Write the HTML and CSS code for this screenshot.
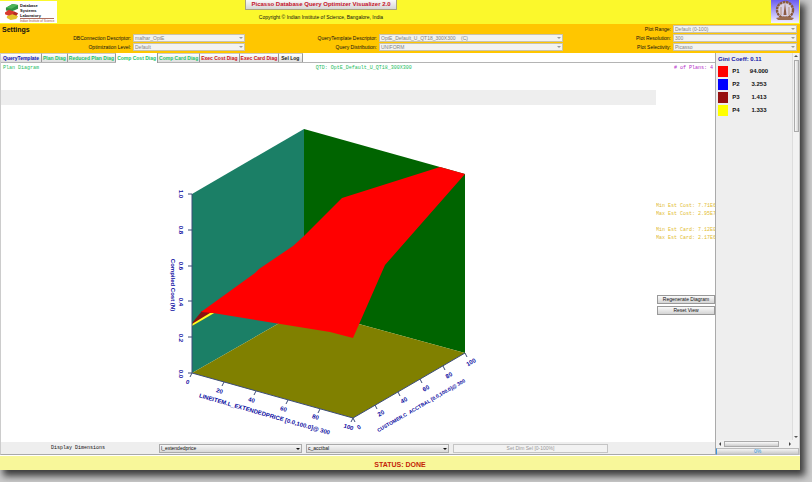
FILE: index.html
```html
<!DOCTYPE html>
<html lang="en">
<head>
<meta charset="utf-8">
<title>Picasso Database Query Optimizer Visualizer 2.0</title>
<link rel="stylesheet" href="styles.css">
</head>
<body>
<div class="window">
  <header class="banner">
    <div class="lab-logo">
      <svg class="lab-mark" viewBox="0 0 15 18" aria-hidden="true">
        <path d="M1 5 L8 1 L14 2 L14 6 L7 9 L1 8Z" fill="#2f9444"/>
        <path d="M1 5 L8 1 L14 2 L7 6Z" fill="#4cb45a"/>
        <path d="M0 10 L4 7 L10 9 L10 12 L5 14 L0 12Z" fill="#d83a2c"/>
        <path d="M10 9 L14 11 L12 14 L8 13Z" fill="#b52a22"/>
        <path d="M2 14 L8 12 L14 14 L12 17 L6 18 L2 16Z" fill="#e3c32c"/>
      </svg>
      <div class="lab-name">
        <div>Database</div><div>Systems</div><div>Laboratory</div>
        <small>Indian Institute of Science</small>
      </div>
    </div>
    <div class="heading">
      <button class="title" type="button">Picasso Database Query Optimizer Visualizer 2.0</button>
      <p class="copyright">Copyright © Indian Institute of Science, Bangalore, India</p>
    </div>
    <svg class="crest" viewBox="0 0 28 23" aria-hidden="true">
      <defs>
        <linearGradient id="sky" x1="0" y1="0" x2="0" y2="1">
          <stop offset="0" stop-color="#6a5cf0"/><stop offset="1" stop-color="#f4f2ff"/>
        </linearGradient>
      </defs>
      <rect width="28" height="23" fill="url(#sky)"/>
      <circle cx="14" cy="10" r="8" fill="#d9cfe2" stroke="#8a5a3c" stroke-width="2.4" stroke-dasharray="2.6 .6"/>
      <path d="M14 3 L15.500 15 H12.500Z" fill="#8c5a44"/>
      <path d="M10 7 V15 M18 7 V15" stroke="#b4917c"/>
      <path d="M5 18 Q14 15 23 18 L21 20 H7Z" fill="#9a6c50"/>
    </svg>
  </header>

  <section class="settings">
    <h2>Settings</h2>
    <label class="c1 r2" for="conn">DBConnection Descriptor:</label>
    <div class="combo r2"><select id="conn" disabled><option>malhar_OptE</option></select></div>
    <label class="c1 r3" for="level">Optimization Level:</label>
    <div class="combo r3"><select id="level" disabled><option>Default</option></select></div>
    <label class="c3 r2" for="qt">QueryTemplate Descriptor:</label>
    <div class="combo c4 r2"><select id="qt" disabled><option>OptE_Default_U_QT18_300X300 &nbsp;&nbsp; (C)</option></select></div>
    <label class="c3 r3" for="dist">Query Distribution:</label>
    <div class="combo c4 r3"><select id="dist" disabled><option>UNIFORM</option></select></div>
    <label class="c5 r1" for="range">Plot Range:</label>
    <div class="combo c6 r1"><select id="range" disabled><option>Default (0-100)</option></select></div>
    <label class="c5 r2" for="res">Plot Resolution:</label>
    <div class="combo c6 r2"><select id="res" disabled><option>300</option></select></div>
    <label class="c5 r3" for="sel">Plot Selectivity:</label>
    <div class="combo c6 r3"><select id="sel" disabled><option>Picasso</option></select></div>
  </section>

  <div class="workspace">
    <main class="main">
      <nav class="tabs" role="tablist">
        <button role="tab" class="blue">QueryTemplate</button>
        <button role="tab" class="green">Plan Diag</button>
        <button role="tab" class="green">Reduced Plan Diag</button>
        <button role="tab" class="green active" aria-selected="true">Comp Cost Diag</button>
        <button role="tab" class="green">Comp Card Diag</button>
        <button role="tab" class="red">Exec Cost Diag</button>
        <button role="tab" class="red">Exec Card Diag</button>
        <button role="tab" class="black">Sel Log</button>
      </nav>
      <div class="info">
        <span>Plan Diagram</span>
        <span>QTD: OptE_Default_U_QT18_300X300</span>
        <span class="plans"># of Plans: 4</span>
      </div>
      <div class="view">
        <div class="band"></div>
        <svg class="plot" viewBox="1 105 655 337" role="img" aria-label="Compiled cost surface">
          <polygon points="192,194 304,129 304,309 192,373" fill="#1b7f66"/>
          <polygon points="304,129 465,174 465,353 304,309" fill="#006400"/>
          <polygon points="192,373 304,309 465,353 353,418" fill="#808000"/>
          <polygon points="192,323 202,311 215,312 192,326" fill="#8b1010"/>
          <polygon points="192,324 210,313 216,312 192,326" fill="#ffff20"/>
          <polygon points="201,312 255,273 259,269 293,246 304,236 342,198 440,167 465,174 385,265 353,338 330,332 213,313" fill="#ff0000"/>
          <g class="axis">
            <path d="M192 194V373L353 418L465 353M188 194h4M188 230h4M188 266h4M188 301h4M188 337h4M188 373h4M192 373l-2 4M224 382l-2 4M256 391l-2 4M288 400l-2 4M320 409l-2 4M353 418l-2 4M353 418l2 4M375 405l2 4M398 392l2 4M420 379l2 4M443 366l2 4M465 353l2 4"/>
          </g>
          <g class="ticks">
            <text transform="translate(179 194) rotate(90)">1.0</text>
            <text transform="translate(179 230) rotate(90)">0.8</text>
            <text transform="translate(179 266) rotate(90)">0.6</text>
            <text transform="translate(179 302) rotate(90)">0.4</text>
            <text transform="translate(179 338) rotate(90)">0.2</text>
            <text transform="translate(179 374) rotate(90)">0.0</text>
            <text transform="translate(187 384) rotate(16)">0</text>
            <text transform="translate(219 393) rotate(16)">20</text>
            <text transform="translate(251 402) rotate(16)">40</text>
            <text transform="translate(283 411) rotate(16)">60</text>
            <text transform="translate(315 419) rotate(16)">80</text>
            <text transform="translate(348 429) rotate(16)">100</text>
            <text transform="translate(360 429) rotate(-30)">0</text>
            <text transform="translate(382 415) rotate(-30)">20</text>
            <text transform="translate(405 402) rotate(-30)">40</text>
            <text transform="translate(427 390) rotate(-30)">60</text>
            <text transform="translate(450 377) rotate(-30)">80</text>
            <text transform="translate(472 364) rotate(-30)">100</text>
          </g>
          <g class="names">
            <text transform="translate(171 285) rotate(90)">Compiled Cost (N)</text>
            <text transform="translate(264 416) rotate(16)">LINEITEM.L_EXTENDEDPRICE [0.0,100.0]@ 300</text>
            <text class="tight" transform="translate(422 407) rotate(-30)">CUSTOMER.C_ACCTBAL [0.0,100.0]@ 300</text>
          </g>
        </svg>
        <aside class="side">
          <p>Min Est Cost: 7.71E6<br>Max Est Cost: 2.95E7</p>
          <p>Min Est Card: 7.12E0<br>Max Est Card: 2.17E6</p>
          <div class="actions">
            <button type="button">Regenerate Diagram</button>
            <button type="button">Reset View</button>
          </div>
        </aside>
      </div>
      <div class="dims">
        <span>Display Dimensions</span>
        <div class="combo live"><select aria-label="First dimension"><option>l_extendedprice</option></select></div>
        <div class="combo live"><select aria-label="Second dimension"><option>c_acctbal</option></select></div>
        <button type="button" disabled>Set Dim Sel [0-100%]</button>
      </div>
    </main>

    <aside class="legend">
      <div class="legend-body">
        <h3>Gini Coeff: 0.11</h3>
        <table>
          <tr><td><i class="swatch p1"></i></td><th>P1</th><td>94.000</td></tr>
          <tr><td><i class="swatch p2"></i></td><th>P2</th><td>3.253</td></tr>
          <tr><td><i class="swatch p3"></i></td><th>P3</th><td>1.413</td></tr>
          <tr><td><i class="swatch p4"></i></td><th>P4</th><td>1.333</td></tr>
        </table>
      </div>
      <div class="vbar"><i class="arrow up"></i><b></b><i class="arrow down"></i></div>
      <div class="hbar"><i class="arrow left"></i><b></b><i class="arrow right"></i></div>
      <div class="progress">0%</div>
    </aside>
  </div>
  <footer class="status">STATUS: DONE</footer>
</div>
</body>
</html>
```
FILE: styles.css
```css
* { box-sizing: border-box; }

body {
  margin: 0;
  height: 100vh;
  padding: 0 12px 12px 0;
  background: #cbcbcb;
  overflow: hidden;
  font: 5px/8px "Liberation Sans", Arial, sans-serif;
  color: #111;
}

h2, h3, p { margin: 0; }

button, select { font: inherit; margin: 0; }

.window {
  height: 100%;
  display: flex;
  flex-direction: column;
  box-shadow: 4px 5px 7px 1px #3c3c3c;
}

/* Banner */
.banner {
  display: grid;
  grid-template-columns: 58px 1fr 58px;
  height: 24px;
  background: #fbf82c;
}

.lab-logo {
  display: flex;
  gap: 1px;
  margin: 1px 1px 1px 0;
  padding: 2px 0 0 5px;
  background: #fff;
}

.lab-mark { width: 14px; height: 17px; flex: none; }

.lab-name {
  font-size: 4px;
  font-weight: bold;
  line-height: 5px;
  white-space: nowrap;
}

.lab-name small {
  display: block;
  border-top: 1px solid #b07060;
  font-size: 3px;
  font-weight: normal;
  line-height: 4px;
  color: #a05040;
}

.heading {
  display: flex;
  flex-direction: column;
  align-items: center;
  padding-right: 158px;
}

.title {
  height: 10px;
  padding: 0 6px;
  border: 1px solid #a9a47c;
  border-top: 0;
  background: linear-gradient(#fafafa, #d6d6d6);
  color: #c4122a;
  font-size: 6px;
  font-weight: bold;
  line-height: 9px;
  white-space: nowrap;
}

.copyright { margin-top: 3px; white-space: nowrap; }

.crest { width: 28px; height: 23px; justify-self: end; margin-right: 1px; }

/* Settings */
.settings {
  display: grid;
  grid-template-columns: 133fr 112fr 134fr 184fr 110fr 124fr;
  grid-template-rows: repeat(3, 9px);
  height: 29px;
  padding: 1px 3px 1px 0;
  background: #ffc600;
}

.settings h2 {
  grid-area: 1 / 1;
  padding-left: 2px;
  font-size: 7px;
  line-height: 9px;
}

.settings label { text-align: right; padding-right: 2px; line-height: 9px; white-space: nowrap; }

.r1 { grid-row: 1; }
.r2 { grid-row: 2; }
.r3 { grid-row: 3; }
.c1 { grid-column: 1; }
.combo { grid-column: 2; position: relative; display: flex; }
.c3 { grid-column: 3; }
.combo.c4 { grid-column: 4; }
.c5 { grid-column: 5; }
.combo.c6 { grid-column: 6; }

.combo select {
  appearance: none;
  width: 100%;
  height: 8px;
  padding: 0 1px;
  border: 1px solid #c9c3ac;
  border-radius: 0;
  background: #f3f3f1;
  color: #848484;
  line-height: 6px;
  opacity: 1;
}

.combo::after {
  content: "";
  position: absolute;
  right: 2px;
  top: 3px;
  border: 2px solid transparent;
  border-top-color: #999;
  border-bottom: 0;
}

/* Work area */
.workspace {
  flex: 1;
  min-height: 0;
  display: grid;
  grid-template-columns: minmax(0, 1fr) 84px;
  border-bottom: 1px solid #fff;
}

.main {
  display: flex;
  flex-direction: column;
  min-height: 0;
  background: #fff;
  border-left: 1px solid #ccc;
  border-right: 1px solid #aaa;
  border-bottom: 1px solid #aaa;
}

.tabs {
  display: flex;
  align-items: flex-end;
  height: 10px;
  border-bottom: 1px solid #b4b4b4;
}

.tabs button {
  height: 9px;
  padding: 0 1px;
  border: 0;
  border-right: 1px solid #999;
  border-top: 1px solid #ccc;
  background: linear-gradient(#fff, #dedede);
  font-size: 5px;
  font-weight: bold;
  line-height: 8px;
  white-space: nowrap;
}

.tabs button:first-child { padding: 0 2px; }
.tabs .active { height: 10px; margin-bottom: -1px; border-top: 0; background: #fff; }
.tabs button:last-child { padding: 0 3px 0 2px; }
.blue { color: #1212b4; }
.green { color: #1cc468; }
.red { color: #cc1020; }
.black { color: #222; }

.info {
  display: grid;
  grid-template-columns: 315fr 300fr 100fr;
  height: 27px;
  padding: 1px 2px 0 2px;
  font-family: "Liberation Mono", monospace;
  color: #1cbc60;
}

.plans { text-align: right; color: #b428c8; }

.view {
  flex: 1;
  min-height: 0;
  display: grid;
  grid-template-columns: minmax(0, 1fr) 59px;
  grid-template-rows: 15px minmax(0, 1fr);
}

.band { background: #eee; }

.plot { grid-row: 2; width: 100%; height: 100%; }

.axis path { fill: none; stroke: #3c4c78; stroke-width: 1; }

.ticks text, .names text {
  font: bold 6px "Liberation Sans", Arial, sans-serif;
  fill: #0808a0;
  text-anchor: middle;
}

.names .tight { font-size: 5px; }

.side {
  grid-row: 2;
  grid-column: 2;
  padding-top: 97px;
  overflow: hidden;
  font-family: "Liberation Mono", monospace;
  color: #e2bc30;
  white-space: nowrap;
}

.side p { margin-bottom: 8px; }

.actions {
  display: grid;
  gap: 2px;
  margin: 53px 0 0 1px;
  font-family: "Liberation Sans", Arial, sans-serif;
}

.actions button {
  height: 9px;
  padding: 0;
  border: 1px solid #999;
  background: linear-gradient(#fafafa, #d4d4d4);
  color: #111;
  line-height: 7px;
}

.dims {
  display: grid;
  grid-template-columns: 154fr 143fr 143fr 155fr 103fr;
  column-gap: 4px;
  align-items: center;
  height: 12px;
  background: #eee;
}

.dims span { text-align: center; font-family: "Liberation Mono", monospace; }
.dims .combo { grid-column: auto; }

.dims .combo select {
  height: 9px;
  border-color: #aaa;
  background: linear-gradient(#f6f6f6, #d8d8d8);
  color: #111;
  line-height: 7px;
}

.dims .live::after { top: 4px; border-top-color: #111; }

.dims button {
  height: 9px;
  padding: 0;
  border: 1px solid #c4c4c4;
  background: #f2f2f2;
  color: #999;
  line-height: 7px;
}

/* Legend */
.legend {
  display: grid;
  grid-template-columns: minmax(0, 1fr) 6px;
  grid-template-rows: minmax(0, 1fr) 8px 7px;
  background: #eee;
  border-right: 1px solid #ccc;
}

.legend-body { padding: 2px 0 0 2px; border-right: 1px solid #ddd; }

.legend h3 { color: #1414a8; font-size: 6px; line-height: 9px; white-space: nowrap; }

.legend table { border-spacing: 0; margin-top: 2px; font-size: 6px; font-weight: bold; line-height: 11px; }
.legend td, .legend th { padding: 0 0 2px; }
.legend th { width: 16px; }
.legend td:last-child { width: 30px; text-align: center; }

.swatch { display: block; width: 10px; height: 11px; }
.p1 { background: #f00; }
.p2 { background: #00f; }
.p3 { background: #961010; }
.p4 { background: #ff0; }

.vbar, .hbar { display: flex; align-items: center; background: #f2f2f2; }
.vbar { flex-direction: column; padding: 2px 0; }
.vbar b { width: 5px; height: 72px; margin: 3px 0 auto; border: 1px solid #aaa; background: linear-gradient(90deg, #fafafa, #d4d4d4); }
.hbar { grid-column: 1 / 3; padding: 0 8px 0 3px; }
.hbar b { width: 55px; height: 6px; margin: 0 auto 0 3px; border: 1px solid #aaa; background: linear-gradient(#fafafa, #ccc); }

.arrow { border: 2px solid transparent; }
.up { border-top: 0; border-bottom-color: #555; }
.down { border-bottom: 0; border-top-color: #555; }
.left { border-left: 0; border-right-color: #444; }
.right { border-right: 0; border-left-color: #444; }

.progress {
  grid-column: 1 / 3;
  border: 1px solid #bbb;
  border-left: 1px solid #3c94dc;
  background: linear-gradient(#f4f4f4, #c8c8c8);
  color: #2c94dc;
  line-height: 5px;
  text-align: center;
}

.status {
  height: 14px;
  background: #f8f79a;
  color: #c42408;
  font-size: 7px;
  font-weight: bold;
  line-height: 18px;
  text-align: center;
}
```
